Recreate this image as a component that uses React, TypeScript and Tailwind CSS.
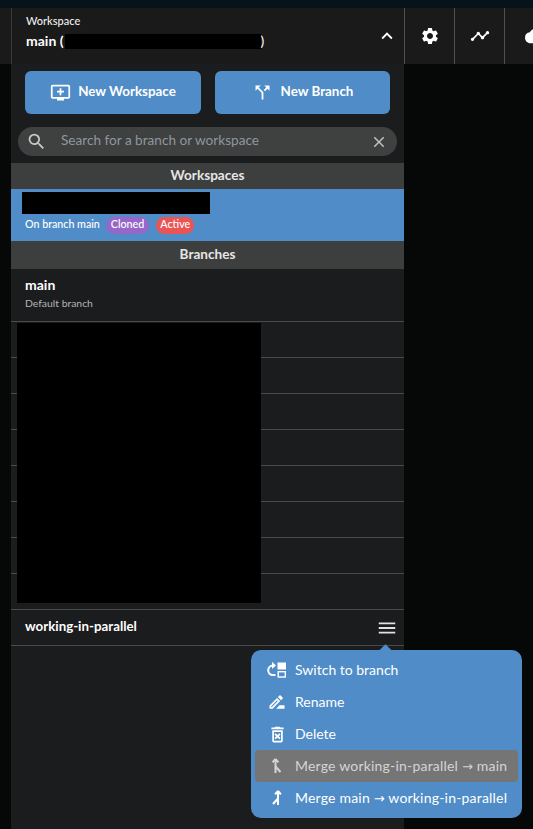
import React from 'react';
import {
  MdAddToQueue,
  MdCallSplit,
  MdClose,
  MdCloud,
  MdExpandLess,
  MdMenu,
  MdOutlineDeleteForever,
  MdOutlineDriveFileRenameOutline,
  MdSearch,
  MdSettings,
  MdTimeline,
} from 'react-icons/md';

const SwitchIcon = () => (
  <svg width="20" height="20" viewBox="0 0 20 20" fill="none">
    <path d="M7.5 5.5H6a4.8 4.8 0 0 0 0 9.6h2.5" stroke="white" strokeWidth="2" />
    <path d="M5 1.8l4 3.6-4 3.6z" fill="white" />
    <rect x="10.5" y="2.5" width="8.5" height="7" fill="white" />
    <rect x="11.2" y="11.7" width="7.1" height="5.3" stroke="white" strokeWidth="1.4" />
  </svg>
);

const MergeDown = () => (
  <svg width="20" height="20" viewBox="0 0 20 20" fill="none" stroke="#d4d4d4" strokeWidth="2">
    <path d="M8.5 4v13" />
    <path d="M8.5 3L5.6 6.4M8.5 3l2.9 3.4" />
    <path d="M8.5 10.5l5 5.5" />
  </svg>
);

const MergeUp = () => (
  <svg width="20" height="20" viewBox="0 0 20 20" fill="none" stroke="white" strokeWidth="2">
    <path d="M11 4v13" />
    <path d="M11 3L8.1 6.4M11 3l2.9 3.4" />
    <path d="M11 10.5L6 16" />
  </svg>
);

const branchRows = Array.from({ length: 8 });

export default function App() {
  return (
    <div className="relative h-[829px] w-[533px] overflow-hidden bg-[#060808] font-['Lato',sans-serif] text-white">
      <div className="h-2 bg-[#07131a]" />

      {/* top bar */}
      <div className="flex h-14 bg-[#1a1a1a] pl-[11px]">
        <div className="flex w-[393px] items-center border-l border-[#3a3a3a] pl-[14px] pr-[6px]">
          <div className="flex-1 self-start pt-[6px]">
            <div className="text-[11px] font-medium leading-[13px] text-[#eeeeee]">Workspace</div>
            <div className="mt-[5px] flex items-center text-[14px] font-bold leading-[17px]">
              main (
              <span className="ml-px mt-[2px] h-[15px] w-[196px] bg-black" />
              <span className="font-normal">)</span>
            </div>
          </div>
          <MdExpandLess size={22} />
        </div>
        <div className="flex w-[50px] items-center justify-center border-l border-[#505050]">
          <MdSettings size={20} />
        </div>
        <div className="flex w-[50px] items-center justify-center border-l border-[#505050]">
          <MdTimeline size={20} />
        </div>
        <div className="flex w-[29px] items-center overflow-hidden border-l border-[#505050] pl-[20px]">
          <MdCloud size={22} className="shrink-0" />
        </div>
      </div>

      {/* side panel */}
      <div className="h-[765px] w-[393px] translate-x-[11px] bg-[#1b1c1e]">
        <div className="flex gap-[14px] pl-[14px] pr-[14px] pt-[7px]">
          <div className="flex h-[43px] w-[176px] items-center justify-center gap-[7px] rounded-md bg-[#508dc8] text-[13.4px] font-bold">
            <MdAddToQueue size={21} />
            <span className="pb-[3px]">New Workspace</span>
          </div>
          <div className="flex h-[43px] w-[175px] items-center justify-center gap-2 rounded-md bg-[#508dc8] text-[13.4px] font-bold">
            <MdCallSplit size={21} />
            <span className="pb-[3px]">New Branch</span>
          </div>
        </div>

        <div className="mx-[7px] mt-[13px] flex h-[29px] w-[379px] items-center rounded-full bg-[#3f4040] pl-[8px] pr-[9px]">
          <MdSearch size={21} className="text-[#c8c8c8]" />
          <span className="ml-[14px] flex-1 pb-[2px] text-[13.6px] text-[#8f979e]">Search for a branch or workspace</span>
          <MdClose size={18} className="text-[#c0c0c0]" />
        </div>

        <div className="mt-[7px] flex h-[26px] items-center justify-center bg-[#3d3e3e] pb-[1px] text-[13.6px] font-bold text-[#e6e6e6]">
          Workspaces
        </div>
        <div className="h-[52px] bg-[#508dc8] pl-[11px] pt-[3px]">
          <div className="h-[22px] w-[188px] bg-black" />
          <div className="mt-[3px] flex items-start pl-[3px] text-[10.7px] font-medium leading-[14px]">
            <span>On branch main</span>
            <span className="ml-[6px] rounded-full bg-[#9667c8] px-[5px] pb-[3px]">Cloned</span>
            <span className="ml-[7px] rounded-full bg-[#ea5455] px-[4px] pb-[3px]">Active</span>
          </div>
        </div>
        <div className="flex h-[28px] items-center justify-center bg-[#3d3e3e] pb-[2px] text-[13.6px] font-bold text-[#e6e6e6]">
          Branches
        </div>

        <div className="h-[53px] border-b border-[#48494a] pl-[14px] pt-[7px]">
          <div className="text-[14px] font-bold leading-[17px]">main</div>
          <div className="mt-[3px] text-[10.4px] leading-[14px] text-[#b4b4b4]">Default branch</div>
        </div>
        {branchRows.map((_, i) => (
          <div key={i} className="h-[36px] border-b border-[#48494a]" />
        ))}
        <div className="flex h-[36px] items-center justify-between border-b border-[#48494a] pl-[14px] pr-[6px]">
          <span className="pb-[2px] text-[13.3px] font-bold">working-in-parallel</span>
          <MdMenu size={22} className="text-[#e2e2e2]" />
        </div>
      </div>

      {/* redacted branch names */}
      <div className="absolute left-[17px] top-[323px] h-[280px] w-[244px] bg-black" />

      {/* branch menu */}
      <div className="absolute left-[251px] top-[650px] h-[168px] w-[271px] rounded-[10px] bg-[#508dc8] px-[4px] pt-[4px] text-[14px]">
        <div className="absolute -top-[4px] left-[130px] h-[9px] w-[9px] rotate-45 bg-[#508dc8]" />
        <div className="relative flex h-[32px] items-center pl-[12px]">
          <SwitchIcon />
          <span className="ml-[8px] pb-[2px]">Switch to branch</span>
        </div>
        <div className="flex h-[32px] items-center pl-[12px]">
          <MdOutlineDriveFileRenameOutline size={20} />
          <span className="ml-[8px] pb-[2px]">Rename</span>
        </div>
        <div className="flex h-[32px] items-center pl-[12px]">
          <MdOutlineDeleteForever size={21} />
          <span className="ml-[7px] pb-[2px]">Delete</span>
        </div>
        <div className="flex h-[32px] items-center rounded-[4px] bg-[#757575] pl-[12px] text-[#d4d4d4]">
          <MergeDown />
          <span className="ml-[8px] tracking-[0.2px]">
            Merge working-in-parallel <span className="font-['DejaVu_Sans',sans-serif] text-[13px]">→</span> main
          </span>
        </div>
        <div className="flex h-[32px] items-center pl-[12px]">
          <MergeUp />
          <span className="ml-[8px] tracking-[0.2px]">
            Merge main <span className="font-['DejaVu_Sans',sans-serif] text-[13px]">→</span> working-in-parallel
          </span>
        </div>
      </div>
    </div>
  );
}
